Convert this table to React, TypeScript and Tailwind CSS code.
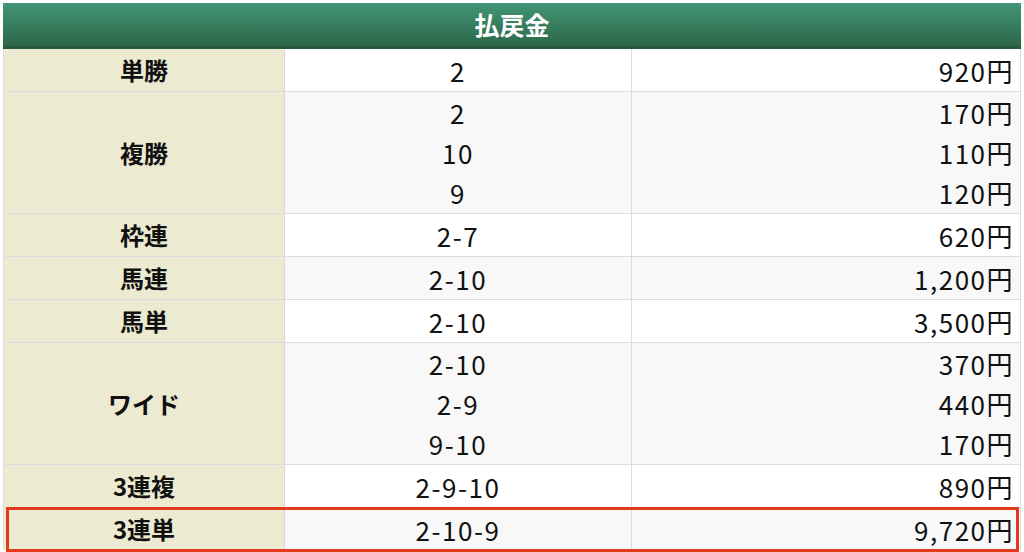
const font = { fontFamily: '"Noto Sans CJK JP", "Noto Sans", sans-serif' };

type Row = { label: string; picks: string[]; pays: string[] };

const rows: Row[] = [
	{ label: '単勝', picks: ['2'], pays: ['920円'] },
	{ label: '複勝', picks: ['2', '10', '9'], pays: ['170円', '110円', '120円'] },
	{ label: '枠連', picks: ['2-7'], pays: ['620円'] },
	{ label: '馬連', picks: ['2-10'], pays: ['1,200円'] },
	{ label: '馬単', picks: ['2-10'], pays: ['3,500円'] },
	{ label: 'ワイド', picks: ['2-10', '2-9', '9-10'], pays: ['370円', '440円', '170円'] },
	{ label: '3連複', picks: ['2-9-10'], pays: ['890円'] },
	{ label: '3連単', picks: ['2-10-9'], pays: ['9,720円'] },
];

function PayRow({ row, index, last }: { row: Row; index: number; last: boolean }) {
	const multi = row.picks.length > 1;
	const bg = index % 2 === 1 ? 'bg-[#f8f8f8]' : 'bg-white';
	return (
		<div className={`relative flex ${last ? '' : 'border-b border-[#dcdcdc]'}`}>
			<div className="w-[281px] shrink-0 flex items-center justify-center bg-[#ecead0] border-r border-[#d6d6d6] text-[24px] font-bold text-[#111]">
				{row.label}
			</div>
			<div className={`w-[347px] shrink-0 flex flex-col justify-center border-r border-[#dcdcdc] ${bg} ${multi ? 'h-[121px]' : 'h-[42px]'}`}>
				{row.picks.map((p) => (
					<div key={p} className="h-[40px] flex items-center justify-center text-[26px] tracking-[1.5px] text-[#111]">{p}</div>
				))}
			</div>
			<div className={`flex-1 flex flex-col justify-center pr-[6px] ${bg}`}>
				{row.pays.map((p, i) => (
					<div key={i} className="h-[40px] flex items-center justify-end text-[26px] tracking-[1.5px] text-[#111]">{p}</div>
				))}
			</div>
			{last && (
				<div className="absolute left-[2px] top-[-1px] w-[1013px] h-[45px] border-[3px] border-[#e3391d] pointer-events-none" />
			)}
		</div>
	);
}

export default function App() {
	return (
		<div className="w-[1024px] h-[552px] bg-white pt-[3px] pl-[3px] overflow-hidden" style={font}>
			<div className="w-[1018px]">
				<div className="h-[43px] bg-gradient-to-b from-[#419676] to-[#2c6849] flex items-center justify-center text-white text-[25px] font-bold">
					払戻金
				</div>
				<div className="h-[3px] bg-[#255a3e]" />
				<div className="border-x border-[#dcdcdc]">
					{rows.map((r, i) => (
						<PayRow key={r.label} row={r} index={i} last={i === rows.length - 1} />
					))}
				</div>
			</div>
		</div>
	);
}
